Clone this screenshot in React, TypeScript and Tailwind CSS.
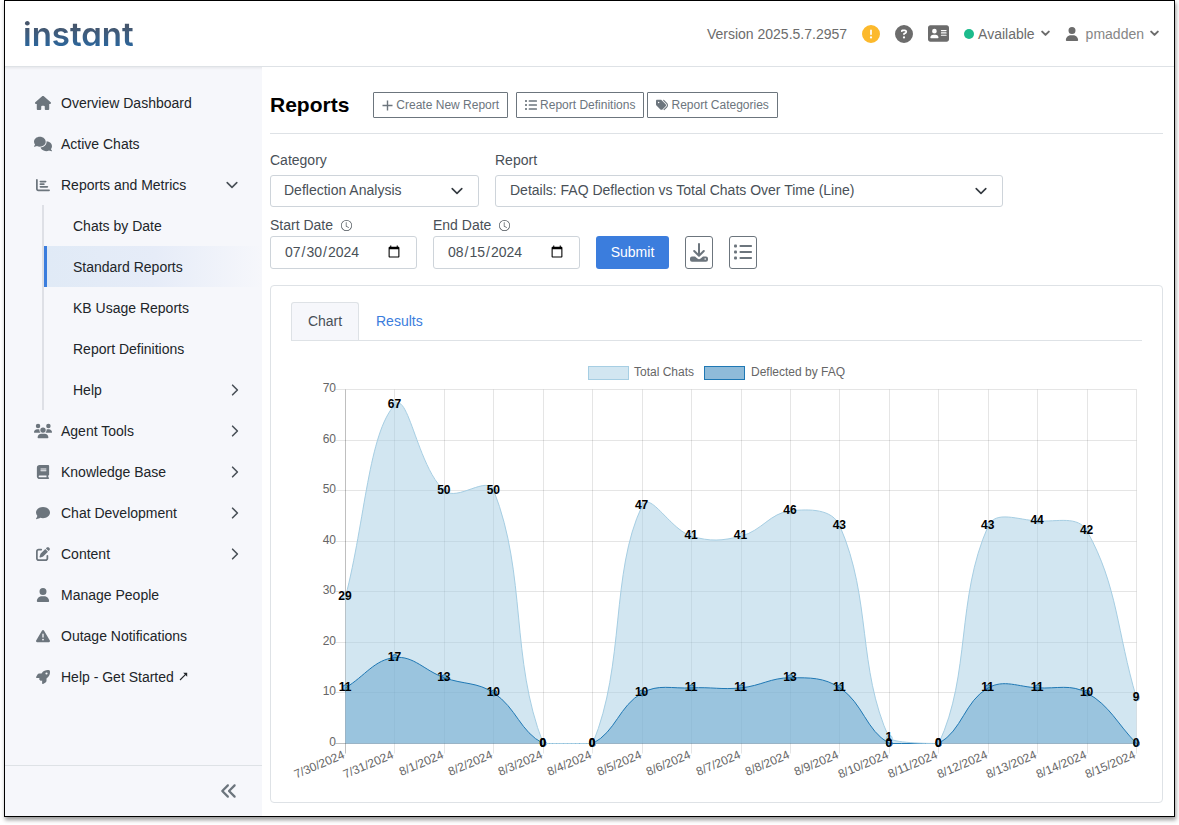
import { useState } from "react";
import type { IconType } from "react-icons";
import {
  FaAddressCard,
  FaAnglesLeft,
  FaBook,
  FaChartBar,
  FaCircleExclamation,
  FaCircleQuestion,
  FaComment,
  FaComments,
  FaHouse,
  FaPenToSquare,
  FaRocket,
  FaTags,
  FaTriangleExclamation,
  FaUser,
  FaUsers,
} from "react-icons/fa6";
import { BsClock } from "react-icons/bs";

type NavItem = {
  label: string;
  icon: IconType;
  size: number;
  expandable?: boolean;
  external?: boolean;
};

const topItems: NavItem[] = [
  { label: "Overview Dashboard", icon: FaHouse, size: 16 },
  { label: "Active Chats", icon: FaComments, size: 18 },
];

const reportItems = [
  "Chats by Date",
  "Standard Reports",
  "KB Usage Reports",
  "Report Definitions",
  "Help",
];

const bottomItems: NavItem[] = [
  { label: "Agent Tools", icon: FaUsers, size: 18, expandable: true },
  { label: "Knowledge Base", icon: FaBook, size: 14, expandable: true },
  { label: "Chat Development", icon: FaComment, size: 14, expandable: true },
  { label: "Content", icon: FaPenToSquare, size: 14, expandable: true },
  { label: "Manage People", icon: FaUser, size: 14 },
  { label: "Outage Notifications", icon: FaTriangleExclamation, size: 14 },
  { label: "Help - Get Started", icon: FaRocket, size: 14, external: true },
];

const days = [
  { date: "7/30/2024", total: 29, deflected: 11 },
  { date: "7/31/2024", total: 67, deflected: 17 },
  { date: "8/1/2024", total: 50, deflected: 13 },
  { date: "8/2/2024", total: 50, deflected: 10 },
  { date: "8/3/2024", total: 0, deflected: 0 },
  { date: "8/4/2024", total: 0, deflected: 0 },
  { date: "8/5/2024", total: 47, deflected: 10 },
  { date: "8/6/2024", total: 41, deflected: 11 },
  { date: "8/7/2024", total: 41, deflected: 11 },
  { date: "8/8/2024", total: 46, deflected: 13 },
  { date: "8/9/2024", total: 43, deflected: 11 },
  { date: "8/10/2024", total: 1, deflected: 0 },
  { date: "8/11/2024", total: 0, deflected: 0 },
  { date: "8/12/2024", total: 43, deflected: 11 },
  { date: "8/13/2024", total: 44, deflected: 11 },
  { date: "8/14/2024", total: 42, deflected: 10 },
  { date: "8/15/2024", total: 9, deflected: 0 },
];

const LEFT = 54.5;
const RIGHT = 845.5;
const TOP = 38.5;
const BOTTOM = 392.5;
const MAX = 70;

type Point = { x: number; y: number };

function toPoints(values: number[]): Point[] {
  const step = (RIGHT - LEFT) / (values.length - 1);
  return values.map((v, i) => ({
    x: LEFT + i * step,
    y: BOTTOM - (v / MAX) * (BOTTOM - TOP),
  }));
}

// Smooth line through the points, control points are kept inside the plot area
function splinePath(points: Point[], tension = 0.4) {
  const clamp = (y: number) => Math.min(BOTTOM, Math.max(TOP, y));
  const controls = points.map((p, i) => {
    const prev = points[i - 1] ?? p;
    const next = points[i + 1] ?? p;
    const d0 = Math.hypot(p.x - prev.x, p.y - prev.y);
    const d1 = Math.hypot(next.x - p.x, next.y - p.y);
    const a = (tension * d0) / (d0 + d1);
    const b = (tension * d1) / (d0 + d1);
    return {
      inX: p.x - a * (next.x - prev.x),
      inY: clamp(p.y - a * (next.y - prev.y)),
      outX: p.x + b * (next.x - prev.x),
      outY: clamp(p.y + b * (next.y - prev.y)),
    };
  });
  let d = `M${points[0].x},${points[0].y}`;
  for (let i = 1; i < points.length; i++) {
    const c0 = controls[i - 1];
    const c1 = controls[i];
    d += ` C${c0.outX},${c0.outY} ${c1.inX},${c1.inY} ${points[i].x},${points[i].y}`;
  }
  return d;
}

function SeriesArea({ values, color }: { values: number[]; color: string }) {
  return (
    <path
      d={`${splinePath(toPoints(values))} L${RIGHT},${BOTTOM} L${LEFT},${BOTTOM} Z`}
      fill={color}
      fillOpacity={0.5}
    />
  );
}

function SeriesLine({ values, color }: { values: number[]; color: string }) {
  const points = toPoints(values);
  return (
    <g stroke={color}>
      <path d={splinePath(points)} fill="none" />
      {points.map((p, i) => (
        <circle key={i} cx={p.x} cy={p.y} r={3} fill={color} fillOpacity={0.5} />
      ))}
    </g>
  );
}

function ValueLabels({ values }: { values: number[] }) {
  return (
    <g fontSize={12} fontWeight={700} fill="#000" textAnchor="middle">
      {toPoints(values).map((p, i) => (
        <text key={i} x={p.x - 0.5} y={p.y + 3}>
          {values[i]}
        </text>
      ))}
    </g>
  );
}

function DeflectionChart() {
  const totals = days.map((d) => d.total);
  const deflected = days.map((d) => d.deflected);
  const columns = toPoints(totals);

  return (
    <svg
      viewBox="0 0 851 431"
      className="mt-[10px] block h-auto w-full"
      role="img"
      aria-label="FAQ deflection vs total chats over time"
    >
      <g fontSize={12} fill="#666">
        <rect x={297.5} y={15.5} width={40} height={13} fill="#a6cee3" fillOpacity={0.5} stroke="#a6cee3" />
        <text x={343} y={25}>Total Chats</text>
        <rect x={413.5} y={15.5} width={40} height={13} fill="#1f78b4" fillOpacity={0.5} stroke="#1f78b4" />
        <text x={460} y={25}>Deflected by FAQ</text>
      </g>

      {[0, 10, 20, 30, 40, 50, 60, 70].map((tick) => {
        const y = Math.floor(BOTTOM - (tick / MAX) * (BOTTOM - TOP)) + 0.5;
        return (
          <g key={tick}>
            <line
              x1={LEFT - 10}
              x2={RIGHT}
              y1={y}
              y2={y}
              stroke="#000"
              strokeOpacity={tick === 0 ? 0.25 : 0.1}
            />
            <text x={45} y={y + 2.5} fontSize={12} fill="#666" textAnchor="end">
              {tick}
            </text>
          </g>
        );
      })}

      {days.map((d, i) => {
        const x = Math.floor(columns[i].x) + 0.5;
        return (
          <g key={d.date}>
            <line
              x1={x}
              x2={x}
              y1={TOP}
              y2={BOTTOM + 10}
              stroke="#000"
              strokeOpacity={i === 0 ? 0.25 : 0.1}
            />
            <text
              x={x - 1}
              y={BOTTOM + 14}
              fontSize={12}
              fill="#666"
              textAnchor="end"
              transform={`rotate(-23 ${x} ${BOTTOM + 12})`}
            >
              {d.date}
            </text>
          </g>
        );
      })}

      <SeriesArea values={deflected} color="#1f78b4" />
      <SeriesArea values={totals} color="#a6cee3" />
      <SeriesLine values={deflected} color="#1f78b4" />
      <SeriesLine values={totals} color="#a6cee3" />
      <ValueLabels values={totals} />
      <ValueLabels values={deflected} />
    </svg>
  );
}

function ChevronDown({ className }: { className?: string }) {
  return (
    <svg
      viewBox="0 0 12 12"
      className={`h-3 w-3 shrink-0 ${className ?? ""}`}
      fill="none"
      stroke="currentColor"
      strokeWidth={1.6}
      strokeLinecap="round"
      strokeLinejoin="round"
    >
      <path d="M1.2 3.6 6 8.4l4.8-4.8" />
    </svg>
  );
}

function ChevronRight() {
  return (
    <svg
      viewBox="0 0 12 12"
      className="ml-auto h-3 w-3 shrink-0 text-[#495057]"
      fill="none"
      stroke="currentColor"
      strokeWidth={1.6}
      strokeLinecap="round"
      strokeLinejoin="round"
    >
      <path d="M4.6 1.2 9.4 6l-4.8 4.8" />
    </svg>
  );
}

// Short heavy arrow used by the header menus
function Caret() {
  return (
    <svg
      viewBox="0 0 9 9"
      className="ml-[6px] h-[9px] w-[9px] text-[#6c6c6c]"
      fill="none"
      stroke="currentColor"
      strokeWidth={2}
      strokeLinecap="round"
      strokeLinejoin="round"
    >
      <path d="M1.2 2.6 4.5 5.9l3.3-3.3" />
    </svg>
  );
}

function PlusIcon() {
  return (
    <svg viewBox="0 0 11 11" className="h-[11px] w-[11px]" stroke="currentColor" strokeWidth={1.4}>
      <path d="M5.5 0.5v10M0.5 5.5h10" />
    </svg>
  );
}

function ListIcon({ className }: { className: string }) {
  return (
    <svg viewBox="0 0 18 18" className={className} fill="currentColor">
      <rect x={0} y={1.5} width={3} height={3} rx={1} />
      <rect x={0} y={7.5} width={3} height={3} rx={1} />
      <rect x={0} y={13.5} width={3} height={3} rx={1} />
      <rect x={5.5} y={2} width={12.5} height={2} rx={0.8} />
      <rect x={5.5} y={8} width={12.5} height={2} rx={0.8} />
      <rect x={5.5} y={14} width={12.5} height={2} rx={0.8} />
    </svg>
  );
}

function DownloadIcon() {
  return (
    <svg viewBox="0 0 20 20" className="h-5 w-5 shrink-0" fill="none" stroke="currentColor">
      <path d="M10 1v11M5.2 8l4.8 4.8L14.8 8" strokeWidth={2} strokeLinecap="round" strokeLinejoin="round" />
      <path
        d="M3 13.4h3L8.4 15.6a2.3 2.3 0 0 0 3.2 0l2.4-2.2h3a2 2 0 0 1 2 2v1.4a2 2 0 0 1-2 2H3a2 2 0 0 1-2-2v-1.4a2 2 0 0 1 2-2Z"
        fill="currentColor"
        stroke="none"
      />
      <circle cx={16.2} cy={16} r={0.8} fill="#fff" stroke="none" />
    </svg>
  );
}

function ExternalArrow() {
  return (
    <svg viewBox="0 0 9 9" className="ml-[5px] h-[9px] w-[9px]" fill="none" stroke="currentColor">
      <path d="M1 8 7.6 1.4" strokeWidth={1.1} />
      <path d="M4.2 0.8h4v4Z" fill="currentColor" stroke="none" />
    </svg>
  );
}

function NavLink({ item }: { item: NavItem }) {
  const Icon = item.icon;
  return (
    <li>
      <a href="#" className="flex h-[41px] items-center pr-[22px] pl-[29px]">
        <span className="flex w-[18px] justify-center text-[#6c757d]">
          <Icon size={item.size} />
        </span>
        <span className="ml-[9px]">{item.label}</span>
        {item.external && <ExternalArrow />}
        {item.expandable && <ChevronRight />}
      </a>
    </li>
  );
}

function Sidebar() {
  return (
    <aside className="flex w-[257px] shrink-0 flex-col bg-[#f6f7fb] shadow-[inset_0_3px_3px_-2px_rgba(0,0,0,0.08)]">
      <nav className="pt-[15px] text-sm text-[#212529]">
        <ul>
          {topItems.map((item) => (
            <NavLink key={item.label} item={item} />
          ))}
          <li>
            <a href="#" className="flex h-[41px] items-center pr-6 pl-[29px]">
              <span className="flex w-[18px] justify-center text-[#6c757d]">
                <FaChartBar size={14} />
              </span>
              <span className="ml-[9px]">Reports and Metrics</span>
              <ChevronDown className="ml-auto text-[#495057]" />
            </a>
            <ul className="ml-[37px] border-l-2 border-[#dee0e6]">
              {reportItems.map((label) => (
                <li key={label}>
                  <a
                    href="#"
                    className={
                      label === "Standard Reports"
                        ? "flex h-[41px] items-center border-l-3 border-[#3b7ddd] bg-linear-to-r from-[#e0eaf6] via-[#e6ecf8] to-[#f6f7fb] pr-[22px] pl-[26px]"
                        : "flex h-[41px] items-center border-l-3 border-transparent pr-[22px] pl-[26px]"
                    }
                  >
                    {label}
                    {label === "Help" && <ChevronRight />}
                  </a>
                </li>
              ))}
            </ul>
          </li>
          {bottomItems.map((item) => (
            <NavLink key={item.label} item={item} />
          ))}
        </ul>
      </nav>
      <div className="mt-auto flex h-[51px] items-center justify-end border-t border-[#dee2e6] pr-6">
        <button type="button" aria-label="Collapse menu" className="text-[#6c757d]">
          <FaAnglesLeft size={18} />
        </button>
      </div>
    </aside>
  );
}

function Header() {
  return (
    <header className="flex h-[66px] shrink-0 items-center justify-between border-b border-[#dee2e6] pr-[15px] pl-[18px]">
      <a
        href="#"
        className="bg-linear-to-b from-[#46566c] from-30% to-[#2b659a] to-80% bg-clip-text font-[Inter,sans-serif] text-[33px] leading-10 font-semibold text-transparent [font-feature-settings:'cv11']"
      >
        instant
      </a>
      <div className="flex items-center gap-[15px] text-sm text-[#6c6c6c]">
        <span>Version 2025.5.7.2957</span>
        <button type="button" aria-label="Alerts" className="text-[#fcb92c]">
          <FaCircleExclamation size={18} />
        </button>
        <button type="button" aria-label="Help">
          <FaCircleQuestion size={18} />
        </button>
        <button type="button" aria-label="Contact card">
          <FaAddressCard size={21} />
        </button>
        <button type="button" className="flex items-center">
          <span className="mr-1 h-[10px] w-[10px] rounded-full bg-[#1cbb8c]" />
          Available
          <Caret />
        </button>
        <button type="button" className="flex items-center text-[#868686]">
          <FaUser size={14} className="mr-[7px] text-[#6c6c6c]" />
          pmadden
          <Caret />
        </button>
      </div>
    </header>
  );
}

export default function App() {
  const [startDate, setStartDate] = useState("2024-07-30");
  const [endDate, setEndDate] = useState("2024-08-15");

  return (
    <div className="flex min-h-screen flex-col bg-white px-1 pb-2 font-['Liberation_Sans',Arial,sans-serif]">
      <div className="flex grow flex-col border border-black bg-white shadow-[1px_3px_4px_rgba(0,0,0,0.4)]">
        <Header />
        <div className="flex grow">
          <Sidebar />
          <main className="min-w-0 grow pt-[25px] pr-[11px] pb-[13px] pl-2 text-sm text-[#495057]">
            <div className="flex items-center border-b border-[#dee2e6] pb-[15px]">
              <h1 className="mr-6 text-[21px] leading-[26px] font-bold text-black">Reports</h1>
              <div className="flex text-xs text-[#6c757d]">
                <button type="button" className="mr-2 flex h-[26px] items-center gap-[3px] rounded-[1px] border border-[#6c757d] px-2">
                  <PlusIcon />
                  Create New Report
                </button>
                <button type="button" className="mr-[3px] flex h-[26px] items-center gap-[3px] rounded-[1px] border border-[#6c757d] px-2">
                  <ListIcon className="h-3 w-3" />
                  Report Definitions
                </button>
                <button type="button" className="flex h-[26px] items-center gap-[3px] rounded-[1px] border border-[#6c757d] px-2">
                  <FaTags size={12} />
                  Report Categories
                </button>
              </div>
            </div>

            <form onSubmit={(e) => e.preventDefault()}>
              <div className="mt-4 flex gap-4">
                <div className="w-[209px]">
                  <label htmlFor="category" className="mb-[5px] block h-5">
                    Category
                  </label>
                  <div className="relative">
                    <select
                      id="category"
                      className="block h-8 w-full appearance-none rounded-[3px] border border-[#ced4da] bg-white px-[13px] pb-[2px]"
                    >
                      <option>Deflection Analysis</option>
                    </select>
                    <ChevronDown className="pointer-events-none absolute top-[10px] right-4 text-[#343a40]" />
                  </div>
                </div>
                <div className="w-[508px]">
                  <label htmlFor="report" className="mb-[5px] block h-5">
                    Report
                  </label>
                  <div className="relative">
                    <select
                      id="report"
                      className="block h-8 w-full appearance-none rounded-[3px] border border-[#ced4da] bg-white px-[14px] pb-[2px]"
                    >
                      <option>Details: FAQ Deflection vs Total Chats Over Time (Line)</option>
                    </select>
                    <ChevronDown className="pointer-events-none absolute top-[10px] right-4 text-[#343a40]" />
                  </div>
                </div>
              </div>

              <div className="mt-2 flex items-end gap-4">
                <div className="w-[147px]">
                  <label htmlFor="start" className="mb-px flex h-5 items-center gap-2">
                    Start Date <BsClock size={11} />
                  </label>
                  <input
                    id="start"
                    type="date"
                    value={startDate}
                    onChange={(e) => setStartDate(e.target.value)}
                    className="block h-[33px] w-full rounded-[3px] border border-[#ced4da] px-[13px] pb-[2px]"
                  />
                </div>
                <div className="w-[147px]">
                  <label htmlFor="end" className="mb-px flex h-5 items-center gap-2">
                    End Date <BsClock size={11} />
                  </label>
                  <input
                    id="end"
                    type="date"
                    value={endDate}
                    onChange={(e) => setEndDate(e.target.value)}
                    className="block h-[33px] w-full rounded-[3px] border border-[#ced4da] px-[13px] pb-[2px]"
                  />
                </div>
                <button type="submit" className="h-[33px] w-[73px] rounded-[3px] bg-[#3b7ddd] pb-[2px] text-white">
                  Submit
                </button>
                <button
                  type="button"
                  aria-label="Download"
                  className="flex h-[33px] w-7 items-center justify-center rounded-[3px] border border-[#6c757d] text-[#6c757d]"
                >
                  <DownloadIcon />
                </button>
                <button
                  type="button"
                  aria-label="List"
                  className="flex h-[33px] w-7 items-center justify-center rounded-[3px] border border-[#6c757d] pb-[2px] text-[#6c757d]"
                >
                  <ListIcon className="h-[18px] w-[18px] shrink-0" />
                </button>
              </div>
            </form>

            <section className="mt-4 rounded border border-[#dee2e6] px-5 pt-4 pb-5">
              <div role="tablist" className="flex border-b border-[#dee2e6]">
                <button
                  type="button"
                  role="tab"
                  aria-selected="true"
                  className="h-[38px] w-[68px] rounded-t-[3px] border border-b-0 border-[#dee2e6] bg-[#f6f7fb] pb-px"
                >
                  Chart
                </button>
                <button type="button" role="tab" aria-selected="false" className="h-[38px] px-[17px] text-[#3b7ddd]">
                  Results
                </button>
              </div>
              <DeflectionChart />
            </section>
          </main>
        </div>
      </div>
    </div>
  );
}
